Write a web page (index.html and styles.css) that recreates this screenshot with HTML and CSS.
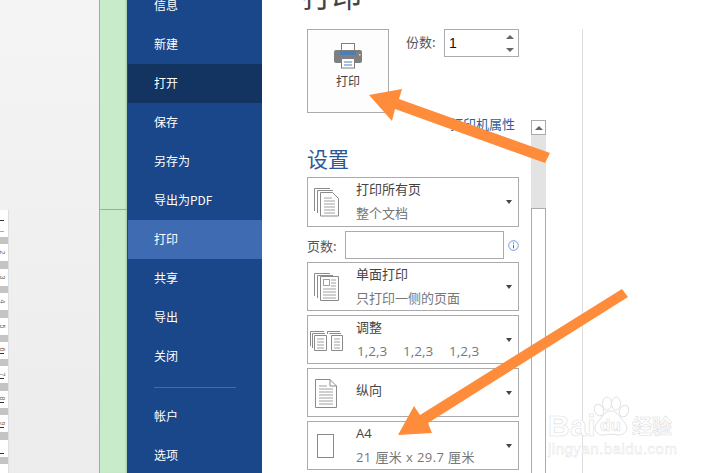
FILE: index.html
```html
<!DOCTYPE html>
<html lang="zh">
<head>
<meta charset="utf-8">
<title>打印</title>
<link rel="stylesheet" href="styles.css">
</head>
<body>
<div class="window">
  <div class="doc-pane">
    <div class="ruler">
      <div class="cell cell-first"><i class="dash"></i><i class="dash dash-soft"></i></div>
      <i class="bar"></i>
      <div class="cell"><span class="digit">2</span></div>
      <i class="bar"></i>
      <div class="cell"><span class="digit">3</span></div>
      <i class="bar"></i>
      <div class="cell"><span class="digit">4</span></div>
      <i class="bar"></i>
      <div class="cell"><span class="digit">5</span></div>
      <i class="bar"></i>
      <div class="cell"><span class="digit">6</span><i class="dash"></i></div>
      <i class="bar"></i>
      <div class="cell"><span class="digit">7</span><i class="dash"></i></div>
      <i class="bar"></i>
      <div class="cell"><span class="digit">8</span><i class="dash"></i></div>
      <i class="bar"></i>
      <div class="cell"><span class="digit">9</span><i class="dash"></i></div>
      <i class="bar"></i>
      <div class="cell cell-empty"><i class="dash"></i></div>
      <i class="bar"></i>
      <div class="cell cell-empty"><i class="dash"></i></div>
    </div>
  </div>
  <div class="green"><div class="green-top"></div></div>
  <nav class="menu">
    <div class="item">信息</div>
    <div class="item">新建</div>
    <div class="item item-dark">打开</div>
    <div class="item">保存</div>
    <div class="item">另存为</div>
    <div class="item">导出为PDF</div>
    <div class="item item-active">打印</div>
    <div class="item">共享</div>
    <div class="item">导出</div>
    <div class="item">关闭</div>
    <div class="sep"></div>
    <div class="item">帐户</div>
    <div class="item">选项</div>
  </nav>
  <main class="backstage">
    <div class="col">
      <h1 class="title">打印</h1>
      <div class="print-row">
        <button class="print-btn">
          <svg class="printer" width="28" height="26" viewBox="0 0 28 26">
            <rect x="7.5" y="0.5" width="13" height="10" fill="#fff" stroke="#7f7f7f"/>
            <rect x="0" y="7" width="28" height="13" rx="2" fill="#7f7f7f"/>
            <rect x="6" y="8" width="16" height="4" fill="#4a7ebb"/>
            <rect x="7.5" y="15.5" width="13" height="9.5" fill="#fff" stroke="#7f7f7f"/>
            <path d="M10 19h8M10 22h8" stroke="#4a7ebb"/>
            <rect x="25" y="11" width="1.5" height="1.5" fill="#ddd"/>
          </svg>
          <span>打印</span>
        </button>
        <span class="copies-label">份数:</span>
        <div class="spinner">
          <span class="spin-value">1</span>
          <span class="spin-arrows"><i class="tri-up"></i><i class="tri-down"></i></span>
        </div>
      </div>
      <div class="link-row"><a class="link">打印机属性</a></div>
      <h2 class="section">设置</h2>

      <div class="dd dd-first">
        <svg class="dd-icon" width="48" height="47" viewBox="0 0 48 47">
          <path d="M6.5 33V10.500H22M9.500 35V12.500H25" class="ln"/>
          <path d="M12.500 38V14.500H24.500L30.500 20.500V38Z" class="pg"/>
          <path d="M16 20h8M16 23h11M16 26h11M16 29h11M16 32h11M16 35h11" class="tx"/>
        </svg>
        <div class="dd-text"><div class="l1">打印所有页</div><div class="l2">整个文档</div></div>
        <i class="caret"></i>
      </div>

      <div class="pages-row">
        <label class="pages-label">页数:</label>
        <div class="pages-input"></div>
        <svg class="info" width="11" height="11" viewBox="0 0 11 11">
          <circle cx="5.500" cy="5.500" r="4.800" fill="#fff" stroke="#6f9bd8"/>
          <path d="M5.500 2.500v1.200M5.500 4.800v3.500" stroke="#3f72b8"/>
        </svg>
      </div>

      <div class="dd">
        <svg class="dd-icon" width="48" height="47" viewBox="0 0 48 47">
          <path d="M6.500 33V10.500H22M9.500 35V12.500H25" class="ln"/>
          <path d="M12.500 37.500V13.500H30.500V37.500Z" class="pg"/>
          <rect x="15.500" y="16.500" width="6" height="6" class="tx" fill="none"/>
          <path d="M23 17h5M23 20h5M23 23h5M15 26h13M15 29h13M15 32h13M15 35h13" class="tx"/>
        </svg>
        <div class="dd-text"><div class="l1">单面打印</div><div class="l2">只打印一侧的页面</div></div>
        <i class="caret"></i>
      </div>

      <div class="dd">
        <svg class="dd-icon" width="48" height="47" viewBox="0 0 48 47">
          <path d="M2.500 30V15.500H16M4.500 32V17.500H17M19.500 18V15.500H32M21.500 18V17.500H33" class="ln"/>
          <path d="M6.500 34.500V19.500H18.500V34.500ZM23.500 34.500V19.500H34.500V34.500Z" class="pg"/>
          <path d="M9 23h7M9 26h7M9 29h7M9 32h7M26 23h6M26 26h6M26 29h6M26 32h6" class="tx"/>
        </svg>
        <div class="dd-text"><div class="l1">调整</div><div class="l2 collate"><span>1,2,3</span><span>1,2,3</span><span>1,2,3</span></div></div>
        <i class="caret"></i>
      </div>

      <div class="dd">
        <svg class="dd-icon" width="48" height="47" viewBox="0 0 48 47">
          <path d="M7.500 38.500V10.500H22L28.500 17V38.500Z" class="pg"/>
          <path d="M22 10.500V17H28.500" class="ln"/>
          <path d="M11 17h8M11 20h14M11 23h14M11 26h14M11 29h14M11 32h14M11 35h14" class="tx"/>
        </svg>
        <div class="dd-text dd-single"><div class="l1">纵向</div></div>
        <i class="caret"></i>
      </div>

      <div class="dd">
        <svg class="dd-icon" width="48" height="47" viewBox="0 0 48 47">
          <rect x="9.500" y="12.500" width="16" height="23" class="pg"/>
        </svg>
        <div class="dd-text latin"><div class="l1">A4</div><div class="l2">21 厘米 x 29.7 厘米</div></div>
        <i class="caret"></i>
      </div>
    </div>

    <div class="scroll">
      <div class="scroll-btn"><i class="tri-up"></i></div>
      <div class="scroll-track"></div>
      <div class="scroll-thumb"></div>
    </div>
    <div class="preview"></div>
  </main>

  <div class="watermark">
    <svg class="paw" width="38" height="42" viewBox="0 0 38 42">
      <g fill="#fff" stroke="#e2e2e2">
        <ellipse cx="7" cy="14" rx="4.500" ry="6" transform="rotate(-25 7 14)"/>
        <ellipse cx="15" cy="7.500" rx="4.500" ry="6.500"/>
        <ellipse cx="24" cy="7.500" rx="4.500" ry="6.500"/>
        <ellipse cx="32" cy="15" rx="4.500" ry="6" transform="rotate(25 32 15)"/>
        <path d="M19 15C26 15 28 22 33 27C38 33 32 40 26 39C22 38 16 38 12 39C5 40 0 33 5 27C10 22 12 15 19 15Z"/>
      </g>
    </svg>
    <span class="wm-bai">Bai</span>
    <span class="wm-du">du</span>
    <span class="wm-cn">经验</span>
    <span class="wm-url">jingyan.baidu.com</span>
  </div>

  <svg class="arrows" width="714" height="473" viewBox="0 0 714 473">
    <polygon points="369,95 402,89 399,99 550,153 545,163 395,109 392,121" fill="#ff8c3a"/>
    <polygon points="398,435 414,406 420,415 622,289 628,297 428,423 432,433" fill="#ff8c3a"/>
  </svg>
</div>
</body>
</html>
```
FILE: styles.css
```css
* { box-sizing: border-box; }
html, body { margin: 0; padding: 0; }
body { font-family: "Noto Sans CJK SC", "Noto Sans", sans-serif; background: #fff; }
i { display: block; font-style: normal; }

.window { position: relative; display: flex; width: 714px; height: 473px; overflow: hidden; background: #fff; }

/* document pane */
.doc-pane { width: 100px; flex: none; padding-top: 210px; border-right: 1px solid #a6a6a6; background: linear-gradient(#f4f4f4, #ececec); }
.ruler { width: 9px; border-right: 1px solid #dedede; background: #fff; display: flex; flex-direction: column; }
.bar { flex: none; height: 7.4px; background: #c4c4c4; }
.cell { flex: none; height: 17px; background: #fff; display: flex; flex-direction: column; justify-content: center; overflow: hidden; }
.cell-first { height: 27px; justify-content: flex-start; padding-top: 10px; gap: 10px; }
.cell-empty { justify-content: flex-end; padding-bottom: 3px; }
.digit { display: block; width: 5px; height: 7px; font: 7px/7px "Liberation Sans", sans-serif; color: #666; text-align: center; transform: rotate(90deg); }
.dash { flex: none; width: 4px; height: 1px; background: #333; }
.dash-soft { background: #aaa; }

/* green strip */
.green { width: 27px; flex: none; background: #c8ecca; box-shadow: inset -2px 0 2px -1px #a9c6ab; }
.green-top { height: 210px; border-bottom: 1px solid #a6a6a6; }

/* nav */
.menu { width: 135px; flex: none; margin-top: -14px; background: #1a4789; padding-left: 1px; color: #fff; font-size: 12px; }
.item { height: 39px; line-height: 37px; padding-left: 26px; }
.item-dark { background: #133361; }
.item-active { background: #3f6bb2; }
.sep { width: 82px; height: 1px; margin: 11px 0 9px 26px; background: #3f6bb2; }

/* backstage */
.backstage { flex: 1; display: flex; align-items: flex-start; padding-left: 45px; color: #444; min-width: 0; }
.col { width: 212px; flex: none; }
.title { margin: -21px 0 20px -5px; font-size: 30px; line-height: 30px; font-weight: 400; color: #444; }
.print-row { display: flex; align-items: flex-start; }
.print-btn { width: 82px; height: 84px; padding: 13px 0 0; border: 1px solid #ababab; background: #fdfdfd; color: #444; font: 12px/18px "Noto Sans CJK SC", sans-serif; display: flex; flex-direction: column; align-items: center; gap: 3px; }
.printer { display: block; }
.copies-label { margin: 3px 0 0 17px; font-size: 13px; line-height: 20px; color: #555; width: 38px; }
.spinner { flex: 1; height: 28px; border: 1px solid #ababab; display: flex; align-items: center; justify-content: space-between; padding: 0 4px 0 4px; }
.spin-value { font: 14px/1 "Liberation Sans", sans-serif; color: #111; }
.spin-arrows { display: flex; flex-direction: column; gap: 9px; }
.tri-up { width: 0; height: 0; border: 4px solid transparent; border-top: 0; border-bottom: 4px solid #666; }
.tri-down { width: 0; height: 0; border: 4px solid transparent; border-bottom: 0; border-top: 4px solid #666; }

.link-row { display: flex; justify-content: flex-end; margin: 1px 4px 0 0; height: 20px; }
.link { font-size: 13px; line-height: 20px; color: #2b5f9e; }
.section { margin: 12px 0 0; height: 31px; font-size: 21px; line-height: 25px; font-weight: 400; color: #2b5797; }

.dd { height: 49px; margin-bottom: 4px; border: 1px solid #ababab; display: flex; align-items: flex-start; }
.dd-first { height: 50px; }
.dd-icon { flex: none; display: block; }
.ln, .pg, .tx { stroke-width: 1; }
.ln { fill: none; stroke: #8a8a8a; }
.pg { fill: #fff; stroke: #8a8a8a; }
.tx { stroke: #a0a0a0; }
.dd-text { flex: 1; font-size: 13px; line-height: 24px; margin-top: -1px; }
.dd-single { padding-top: 10px; }
.l1 { color: #444; }
.l2 { color: #777; }
.collate { display: flex; font-family: "Open Sans", "Noto Sans", sans-serif; font-size: 13.5px; padding-left: 1px; }
.collate span { width: 46px; flex: none; }
.latin { font-family: "Open Sans", "Noto Sans CJK SC", sans-serif; }
.latin .l2 { letter-spacing: 0.4px; }
.caret { flex: none; align-self: center; width: 0; height: 0; margin-right: 6px; border: 3.500px solid transparent; border-bottom: 0; border-top: 4px solid #444; }

.pages-row { display: flex; align-items: center; height: 28px; margin-bottom: 3px; }
.pages-label { width: 38px; font-size: 13px; color: #555; }
.pages-input { width: 159px; height: 28px; border: 1px solid #ababab; }
.info { margin-left: 4px; }

/* scrollbar */
.scroll { width: 15px; flex: none; margin: 120px 0 0 12px; align-self: stretch; display: flex; flex-direction: column; }
.scroll-btn { height: 15px; border: 1px solid #ababab; display: flex; align-items: center; justify-content: center; background: #fff; }
.scroll-track { height: 73px; background: #e3e3e3; }
.scroll-thumb { flex: 1; border: 1px solid #ababab; border-bottom: 0; background: #fff; }

.preview { width: 1px; flex: none; margin: 29px 0 0 36px; align-self: stretch; background: #dedede; }

/* overlays */
.arrows { position: absolute; left: 0; top: 0; pointer-events: none; }
.watermark { position: absolute; left: 548px; top: 395px; width: 130px; height: 62px; color: #fff; }
.paw { position: absolute; left: 44px; top: 1px; }
.wm-bai, .wm-du, .wm-cn, .wm-url { position: absolute; font-family: "Liberation Sans", sans-serif; -webkit-text-stroke: 0.6px #e0e0e0; }
.wm-bai { left: 0; top: 16px; font-size: 30px; line-height: 30px; font-weight: 700; letter-spacing: 0.500px; }
.wm-du { left: 52px; top: 21px; font-size: 17px; line-height: 20px; font-weight: 700; }
.wm-cn { left: 84px; top: 19px; font-family: "Noto Sans CJK SC", sans-serif; font-size: 20px; line-height: 24px; font-weight: 700; }
.wm-url { left: 0; top: 46px; font-size: 15px; line-height: 16px; letter-spacing: 0.5px; -webkit-text-stroke: 0.4px #e0e0e0; }
```
